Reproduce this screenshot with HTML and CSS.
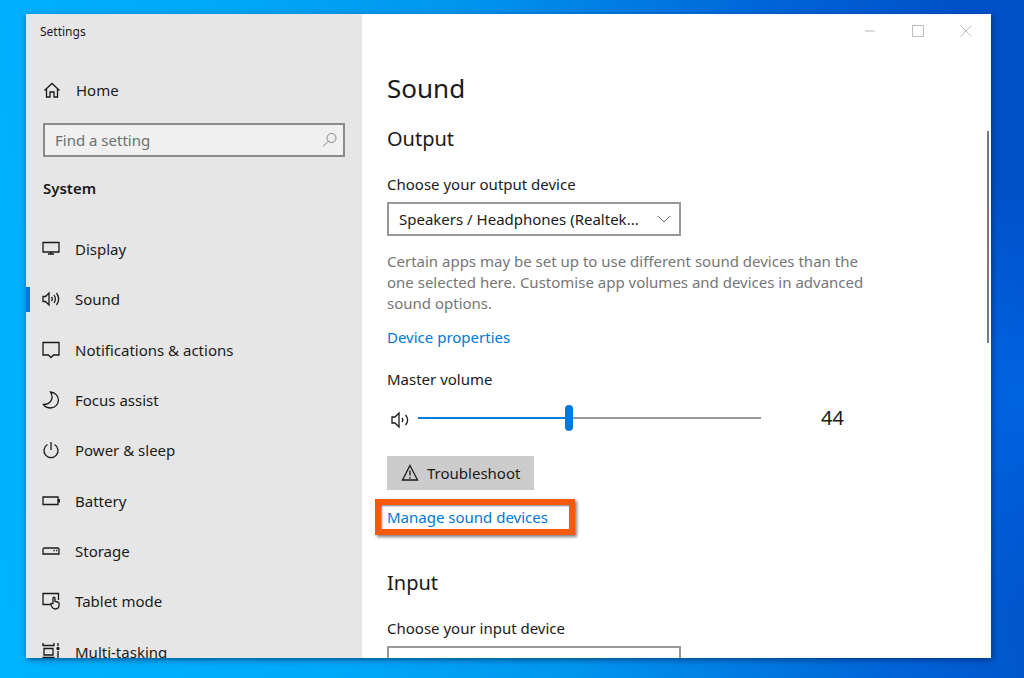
FILE: index.html
```
<!DOCTYPE html>
<html lang="en">

<head>
  <meta charset="UTF-8">
  <meta name="viewport" content="width=device-width, initial-scale=1.0">
  <title>Settings</title>
  <link rel="stylesheet" href="styles.css">
</head>

<body>
  <div class="window">
    <aside class="sidebar">
      <div class="app_name">Settings</div>
      <a class="home" href="#">
        <svg class="icon" viewBox="0 0 18 18"><path d="M1.5 9.500 L9 2.500 L16.500 9.500 M3.500 8 V16 H7 V11 H11 V16 H14.500 V8" /></svg>
        Home
      </a>
      <div class="search">
        <input type="text" class="search_input" placeholder="Find a setting" aria-label="Find a setting">
        <svg class="search_icon" viewBox="0 0 16 16"><circle cx="9.500" cy="6" r="4.500" /><path d="M6.300 9.200 L1 14.500" /></svg>
      </div>
      <h2 class="group">System</h2>
      <nav class="menu">
        <a class="menu_item" href="#">
          <svg class="icon" viewBox="0 0 18 18"><path d="M1 2.500 H17 V12 H1 Z M9 12 V14 M6 14 H12" /></svg>
          Display
        </a>
        <a class="menu_item active" href="#">
          <svg class="icon" viewBox="0 0 18 18"><path d="M1 6.500 H3.500 L7 3 V15 L3.500 11.500 H1 Z M9.500 7 Q11 9 9.500 11 M12 5 Q14.800 9 12 13 M14.500 3 Q18.800 9 14.500 15" /></svg>
          Sound
        </a>
        <a class="menu_item" href="#">
          <svg class="icon" viewBox="0 0 18 18"><path d="M1 1.500 H17 V14 H11.500 L9 16.500 L6.500 14 H1 Z" /></svg>
          Notifications &amp; actions
        </a>
        <a class="menu_item" href="#">
          <svg class="icon" viewBox="0 0 18 18"><path d="M8.500 1 C19 2 19 16.500 8.500 17 Q4 17 1.500 13.500 C8 13.500 12.500 8 8.500 1 Z" /></svg>
          Focus assist
        </a>
        <a class="menu_item" href="#">
          <svg class="icon" viewBox="0 0 18 18"><path d="M9 1 V9 M5.500 3.500 A7 7 0 1 0 12.500 3.500" /></svg>
          Power &amp; sleep
        </a>
        <a class="menu_item" href="#">
          <svg class="icon" viewBox="0 0 18 18"><path d="M1 5 H16 V12.500 H1 Z M17.300 7 V10.500" /></svg>
          Battery
        </a>
        <a class="menu_item" href="#">
          <svg class="icon" viewBox="0 0 18 18"><path d="M2 6 H16 L17 7 V12 H1 V7 Z M11.500 8.500 H12.800 M14 8.500 H15.300" /></svg>
          Storage
        </a>
        <a class="menu_item" href="#">
          <svg class="icon" viewBox="0 0 18 18"><path d="M8 12.500 H1 V1.500 H16.500 V8 M11 12 V6 Q12 4.500 13 6 V9.500 L16 10 Q17.300 10.500 17 12 V14 Q16.500 17 13.500 17 Q11 17 10 15 L8.500 12 Q9.500 11 11 12" /></svg>
          Tablet mode
        </a>
        <a class="menu_item" href="#">
          <svg class="icon" viewBox="0 0 18 18"><path d="M1 0 V2.500 H12 V0 M2 5.500 H11 V12 H2 Z M1 17 V14.500 H12 V17 M16 0 V3 M16 8 V17" /><circle class="dot" cx="16" cy="5.500" r="1" /></svg>
          Multi-tasking
        </a>
      </nav>
    </aside>

    <main class="content">
      <div class="controls">
        <button type="button" class="control" aria-label="Minimise"><svg viewBox="0 0 12 12"><path d="M1 6 H11" /></svg></button>
        <button type="button" class="control" aria-label="Maximise"><svg viewBox="0 0 12 12"><path d="M0.500 0.500 H11.500 V11.500 H0.500 Z" /></svg></button>
        <button type="button" class="control" aria-label="Close"><svg viewBox="0 0 12 12"><path d="M0.500 0.500 L11.500 11.500 M11.500 0.500 L0.500 11.500" /></svg></button>
      </div>

      <h1 class="title">Sound</h1>

      <section class="section">
        <h2 class="subtitle">Output</h2>
        <label class="label" for="output">Choose your output device</label>
        <div class="select_box">
          <select class="select" id="output">
            <option>Speakers / Headphones (Realtek...</option>
          </select>
          <svg class="chevron" viewBox="0 0 14 14"><path d="M1 4 L7 10 L13 4" /></svg>
        </div>
        <p class="hint">Certain apps may be set up to use different sound devices than the one selected here. Customise app volumes and devices in advanced sound options.</p>
        <a class="link" href="#">Device properties</a>

        <label class="label volume_label" for="volume">Master volume</label>
        <div class="volume">
          <svg class="icon" viewBox="0 0 18 18"><path d="M1 6 H4 L8 2 V16 L4 12 H1 Z M11 7 Q12.500 9 11 11 M14.500 4 Q18.800 9 14.500 14" /></svg>
          <input type="range" class="slider" id="volume" min="0" max="100" value="44">
          <output class="volume_value" for="volume">44</output>
        </div>

        <button type="button" class="troubleshoot">
          <svg class="icon" viewBox="0 0 18 18"><path d="M9 1.500 L16.500 16 H1.500 Z M9 6.500 V11.500 M9 13 V14.500" /></svg>
          Troubleshoot
        </button>
        <div class="highlight">
          <a class="link" href="#">Manage sound devices</a>
        </div>
      </section>

      <section class="section">
        <h2 class="subtitle">Input</h2>
        <label class="label" for="input">Choose your input device</label>
        <div class="select_box">
          <select class="select" id="input">
            <option>Microphone (Realtek High Defi...</option>
          </select>
          <svg class="chevron" viewBox="0 0 14 14"><path d="M1 4 L7 10 L13 4" /></svg>
        </div>
      </section>
      <div class="scrollbar"></div>
    </main>
  </div>
</body>

</html>
```
FILE: styles.css
```
* {
  box-sizing: border-box;
}

body {
  height: 100vh;
  margin: 0;
  padding: 14px 33px 20px 26px;

  display: flex;

  font-family: "Noto Sans", "Open Sans", sans-serif;
  font-size: 15px;
  line-height: 20px;
  color: #1a1a1a;
  background:
    radial-gradient(circle at 100% 58%, rgba(0, 110, 240, 0.6), transparent 220px),
    linear-gradient(80deg, #00b4ff 0%, #00a8fa 30%, #0096f0 50%, #0064d8 78%, #0050c8 95%);
  overflow: hidden;
}

a {
  color: inherit;
  text-decoration: none;
}

h1,
h2,
p {
  margin: 0;
}

svg {
  fill: none;
  stroke: currentColor;
}

.window {
  flex: 1;

  display: flex;

  background-color: white;
  box-shadow: 1px 2px 6px rgba(0, 30, 80, 0.6);
  overflow: hidden;
}

.icon {
  width: 18px;
  height: 18px;
  flex-shrink: 0;

  stroke-width: 1.3;
}

.dot {
  fill: currentColor;
}

/* sidebar */
.sidebar {
  width: 336px;
  flex-shrink: 0;

  background-color: #e6e6e6;
}

.app_name {
  padding: 8px 14px;

  font-size: 12px;
}

.home {
  height: 32px;
  margin-top: 24px;
  padding-left: 17px;

  display: flex;
  align-items: center;
  gap: 15px;
}

.search {
  margin: 17px 17px 0;

  position: relative;
}

.search_input {
  width: 100%;
  height: 34px;
  padding: 0 36px 0 10px;

  font: inherit;
  color: #1a1a1a;
  background-color: #f0f0f0;
  border: 2px solid #8b8b8b;
  border-radius: 0;
}

.search_input::placeholder {
  color: #6f6f6f;
}

.search_icon {
  width: 16px;
  height: 16px;

  position: absolute;
  top: 9px;
  right: 7px;

  color: #858585;
}

.group {
  padding: 21px 17px 0;

  font-size: 15px;
  font-weight: 600;
}

.menu {
  height: 479px;
  padding-top: 26px;

  display: grid;
  grid-auto-rows: 1fr;
}

.menu_item {
  padding-left: 16px;

  display: flex;
  align-items: center;
  gap: 15px;
}

.active {
  background: linear-gradient(#0078d7, #0078d7) left center / 4px 25px no-repeat;
}

/* content */
.content {
  flex: 1;
  min-width: 0;
  padding-left: 25px;

  position: relative;
}

.controls {
  height: 34px;
  padding-right: 1px;

  display: flex;
  justify-content: flex-end;
}

.control {
  width: 48px;
  padding: 0;

  display: flex;
  justify-content: center;
  align-items: center;

  color: #bbb;
  background: none;
  border: none;
}

.control svg {
  width: 12px;
  height: 12px;
}

.title {
  padding-top: 22px;

  font-size: 26px;
  font-weight: 400;
  line-height: 36px;
}

.section {
  padding-top: 19px;
}

.section + .section {
  padding-top: 34px;
}

.subtitle {
  font-size: 20px;
  font-weight: 400;
  line-height: 28px;
}

.label {
  margin-top: 21px;

  display: block;
}

.select_box {
  width: 294px;
  margin-top: 8px;

  position: relative;
}

.select {
  width: 100%;
  height: 34px;
  padding: 0 36px 0 10px;

  font: inherit;
  color: #1a1a1a;
  background-color: white;
  border: 2px solid #999;
  border-radius: 0;
  appearance: none;
}

.chevron {
  width: 14px;
  height: 14px;

  position: absolute;
  top: 10px;
  right: 10px;

  color: #666;
  pointer-events: none;
}

.hint {
  max-width: 480px;
  margin-top: 15px;

  line-height: 21px;
  color: #767676;
}

.link {
  margin-top: 13px;

  display: inline-block;

  color: #0078d7;
}

.volume_label {
  margin-top: 22px;
}

.volume {
  height: 38px;
  margin-top: 10px;
  padding-left: 4px;

  display: flex;
  align-items: center;
}

.volume .icon {
  margin-top: 4px;
}

.slider {
  width: 343px;
  height: 26px;
  margin: 0 0 0 9px;

  background: none;
  appearance: none;
}

.slider::-webkit-slider-runnable-track {
  height: 2px;

  background: linear-gradient(90deg, #0078d7 44%, #999 44%);
}

.slider::-webkit-slider-thumb {
  width: 8px;
  height: 26px;
  margin-top: -12px;

  background-color: #0078d7;
  border-radius: 4px;
  appearance: none;
}

.volume_value {
  margin-left: 60px;

  font-size: 20px;
}

.troubleshoot {
  height: 34px;
  margin-top: 19px;
  padding: 0 14px;

  display: flex;
  align-items: center;
  gap: 8px;

  font: inherit;
  color: #1a1a1a;
  background-color: #ccc;
  border: none;
}

.highlight {
  width: 200px;
  height: 36px;
  margin: 9px 0 0 -12px;
  padding-left: 6px;

  display: flex;
  align-items: center;

  border: 6px solid #f4590c;
  box-shadow: 2px 2px 3px rgba(0, 0, 0, 0.5), inset 1px 1px 2px rgba(0, 0, 0, 0.5);
}

.highlight .link {
  margin-top: 0;
}

.scrollbar {
  width: 2px;
  height: 212px;

  position: absolute;
  top: 117px;
  right: 2px;

  background-color: #7a7a7a;
}
```
